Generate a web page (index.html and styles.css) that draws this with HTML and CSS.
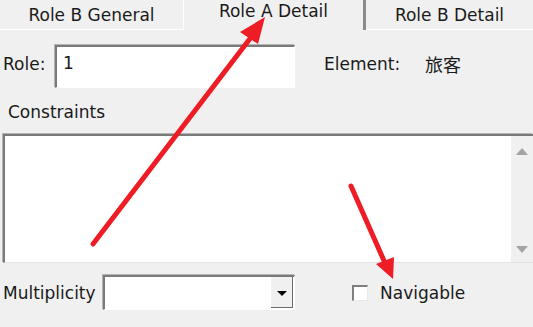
FILE: index.html
```html
<!DOCTYPE html>
<html lang="en">
<head>
  <meta charset="UTF-8">
  <title>Role A Detail</title>
  <link rel="stylesheet" href="styles.css">
</head>
<body>

<div class="tabs">
  <div class="tab">Role B General</div>
  <div class="tab active">Role A Detail</div>
  <div class="tab last">Role B Detail</div>
</div>

<div class="panel">
  <div class="role-row">
    <span class="label role-label">Role:</span>
    <div class="field role-field">1</div>
    <span class="label element-label">Element:</span>
    <span class="label element-value">旅客</span>
  </div>

  <div class="label constraints-label">Constraints</div>

  <div class="memo">
    <div class="memo-body"></div>
    <div class="scroll">
      <span class="arrow up"></span>
      <span class="arrow down"></span>
    </div>
  </div>

  <div class="bottom-row">
    <span class="label mult-label">Multiplicity</span>
    <div class="field combo">
      <div class="combo-btn"><span class="caret"></span></div>
    </div>
    <span class="check"></span>
    <span class="label">Navigable</span>
  </div>
</div>

<!-- annotation arrows drawn over the dialog -->
<svg class="annot" width="533" height="327" viewBox="0 0 533 327">
  <line x1="93" y1="244" x2="252" y2="36" stroke="#ee1c25" stroke-width="5" stroke-linecap="round"/>
  <polygon points="265,17 240,32 258,44" fill="#ee1c25"/>
  <line x1="351" y1="186" x2="385" y2="263" stroke="#ee1c25" stroke-width="5" stroke-linecap="round"/>
  <polygon points="393,279 376,264 394,257" fill="#ee1c25"/>
</svg>

</body>
</html>
```

FILE: styles.css
```css
body {
  margin: 0;
  width: 533px;
  height: 327px;
  overflow: hidden;
  background-color: #f0f0f0;
  font-family: "DejaVu Sans", "Noto Sans CJK SC", sans-serif;
  font-size: 17px;
  color: #1a1a1a;
  position: relative;
}
.tabs {
  display: flex;
  height: 30px;
}
.tab {
  width: 184px;
  box-sizing: border-box;
  border-right: 1px solid #ffffff;
  border-bottom: 1px solid #ffffff;
  text-align: center;
  line-height: 28px;
  padding-top: 1px;
}
.tab.active {
  width: 182px;
  border-bottom: none;
  border-right: 3px solid #8a8a8a;
  line-height: 22px;
  padding-top: 0;
}
.tab.last {
  flex: 1;
  border-right: none;
}
.panel {
  padding: 15px 0 0 3px;
}
.label {
  white-space: nowrap;
}
.role-row {
  display: flex;
  align-items: center;
  height: 43px;
}
.role-row .label {
  margin-bottom: 6px;
}
.role-label {
  width: 52px;
}
.field {
  box-sizing: border-box;
  background: #ffffff;
  border-top: 2px solid #7a7a7a;
  border-left: 2px solid #7a7a7a;
  border-right: 1px solid #ffffff;
  border-bottom: 1px solid #ffffff;
  box-shadow: -1px -1px 0 #b4b4b4;
}
.role-field {
  width: 240px;
  height: 43px;
  padding: 5px 0 0 6px;
  line-height: 22px;
  align-self: flex-start;
}
.element-label {
  margin-left: 29px;
  width: 101px;
}
.element-value {
  font-size: 18px;
  font-family: "Noto Sans CJK SC", sans-serif;
}
.constraints-label {
  margin: 13px 0 0 5px;
  height: 22px;
  line-height: 22px;
}
.memo {
  display: flex;
  height: 129px;
  margin-top: 11px;
  box-sizing: border-box;
  border-top: 2px solid #7a7a7a;
  border-left: 2px solid #7a7a7a;
  border-bottom: 1px solid #e3e3e3;
  box-shadow: -1px -1px 0 #b4b4b4;
}
.memo-body {
  flex: 1;
  background: #ffffff;
}
.scroll {
  width: 22px;
  background: #f0f0f0;
  display: flex;
  flex-direction: column;
  justify-content: space-between;
  align-items: center;
  padding: 12px 0 9px;
}
.arrow {
  width: 0;
  height: 0;
  border-left: 6px solid transparent;
  border-right: 6px solid transparent;
}
.arrow.up {
  border-bottom: 7px solid #a3a3a3;
}
.arrow.down {
  border-top: 7px solid #a3a3a3;
}
.bottom-row {
  display: flex;
  align-items: center;
  margin-top: 12px;
  height: 35px;
}
.mult-label {
  width: 100px;
}
.combo {
  width: 192px;
  height: 35px;
  display: flex;
  justify-content: flex-end;
  padding: 0 1px 1px 0;
}
.combo-btn {
  width: 22px;
  box-sizing: border-box;
  background: #f0f0f0;
  border-right: 1px solid #6a6a6a;
  border-bottom: 1px solid #6a6a6a;
  display: flex;
  align-items: center;
  justify-content: center;
}
.caret {
  width: 0;
  height: 0;
  border-left: 5px solid transparent;
  border-right: 5px solid transparent;
  border-top: 5px solid #000000;
  margin-top: 2px;
}
.check {
  width: 16px;
  height: 16px;
  box-sizing: border-box;
  margin: 0 12px 0 57px;
  background: #ffffff;
  border-top: 2px solid #808080;
  border-left: 2px solid #808080;
  border-right: 1px solid #e8e8e8;
  border-bottom: 1px solid #e8e8e8;
}
.annot {
  position: absolute;
  left: 0;
  top: 0;
  pointer-events: none;
}
```
